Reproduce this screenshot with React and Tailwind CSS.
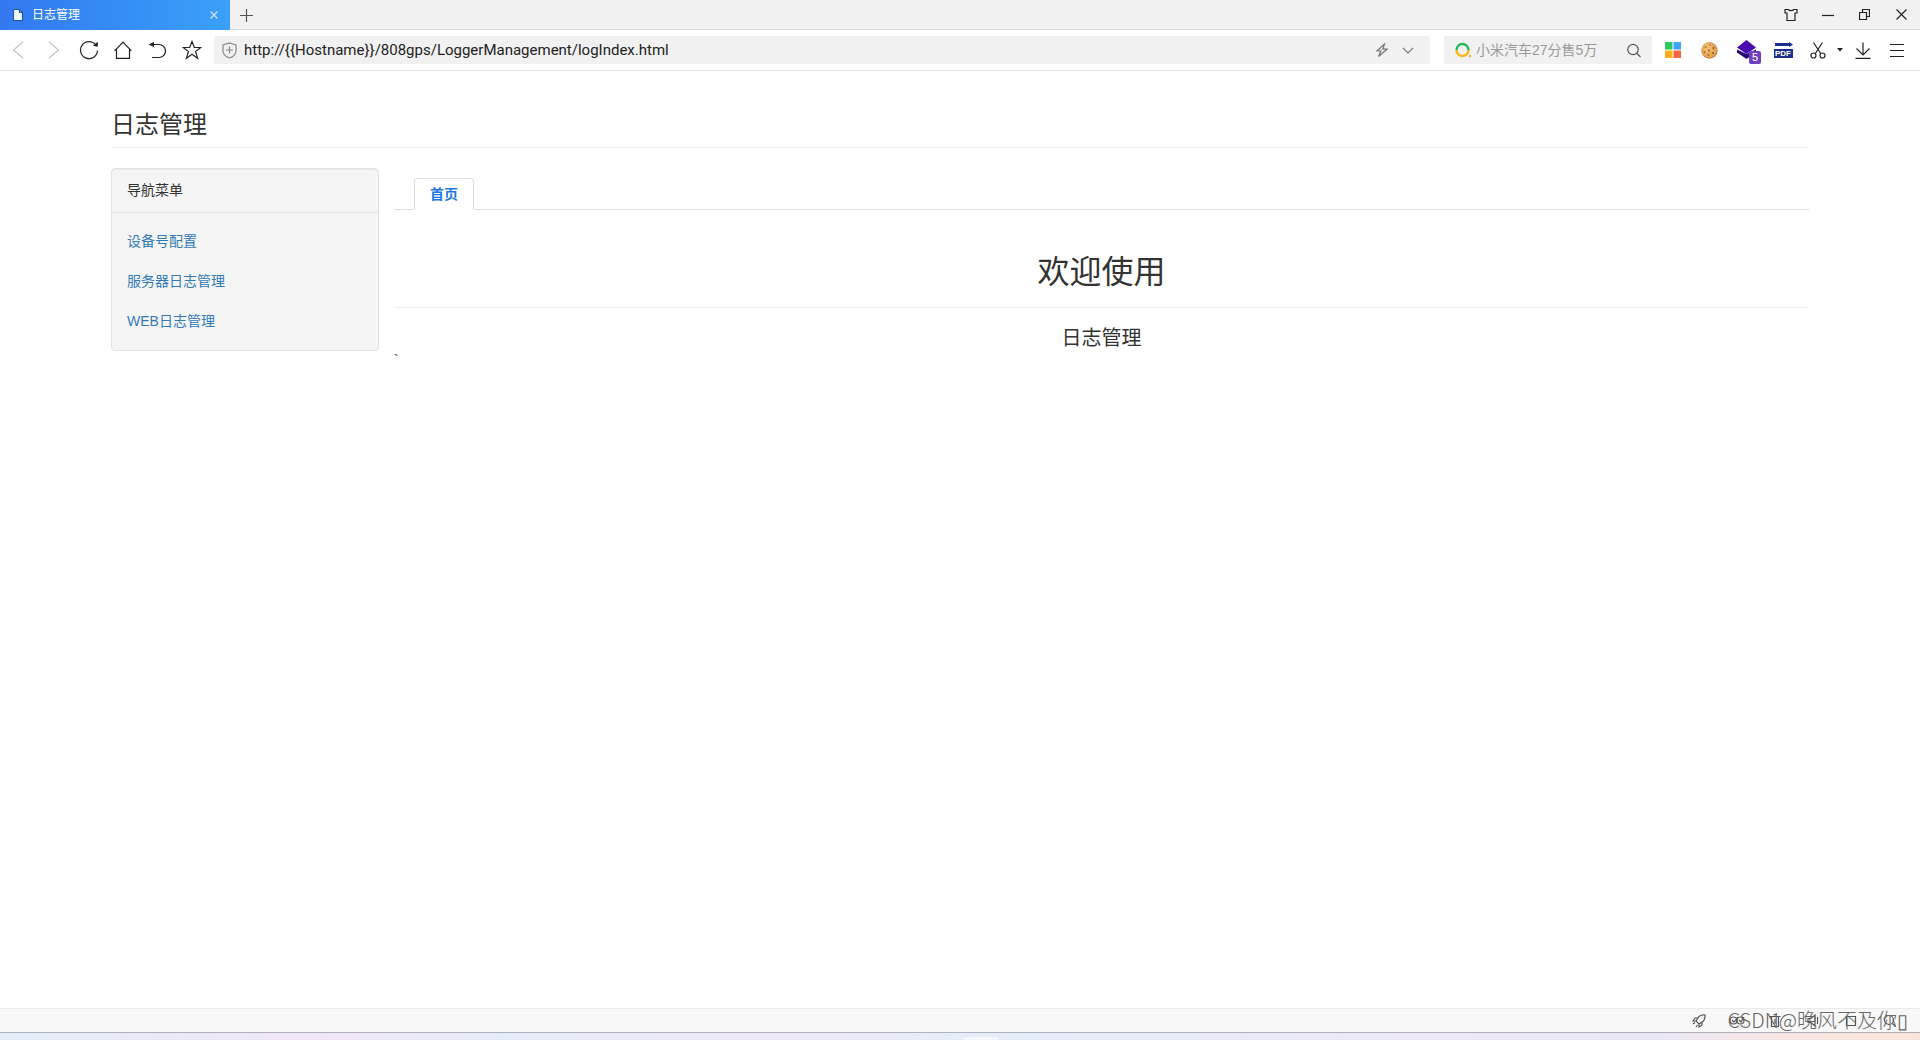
import clsx from 'clsx';

const menu = ['设备号配置', '服务器日志管理', 'WEB日志管理'];

function Icon({ w, h, className, children }) {
  return (
    <svg
      width={w}
      height={h}
      viewBox={`0 0 ${w} ${h}`}
      fill="none"
      stroke="currentColor"
      strokeWidth="1.2"
      className={clsx('shrink-0', className)}
      aria-hidden="true"
    >
      {children}
    </svg>
  );
}

function IconButton({ label, className, children }) {
  return (
    <button
      type="button"
      aria-label={label}
      className={clsx('flex h-full shrink-0 items-center justify-center', className)}
    >
      {children}
    </button>
  );
}

function TabStrip() {
  return (
    <div className="flex h-[30px] items-stretch border-b border-[#dcdcdc] bg-[#f1f1f1] text-[#222]">
      <div className="-mb-px flex w-[230px] items-center bg-linear-to-r from-[#3478f0] via-[#358cf5] to-[#3aa0f8] pr-2.5 pl-3 text-white">
        <Icon w={12} h={14}>
          <path d="M1.500 1.500h6l3 3v8h-9z" fill="#f4f6fa" stroke="#1f5aa8" />
          <path d="M7.500 1.500v3h3" stroke="#1f5aa8" />
        </Icon>
        <span className="ml-2 flex-1 truncate text-xs">日志管理</span>
        <button type="button" aria-label="关闭标签页" className="flex size-3 items-center justify-center">
          <Icon w={8} h={8}>
            <path d="M.5.5l7 7M7.500.5l-7 7" stroke="#cfe3ff" />
          </Icon>
        </button>
      </div>
      <IconButton label="新建标签页" className="w-8 text-[#555]">
        <Icon w={14} h={14}>
          <path d="M7.500 1v13M1 7.500h13" />
        </Icon>
      </IconButton>
      <div className="flex-1" />
      <IconButton label="皮肤" className="w-[37px]">
        <Icon w={14} h={14}>
          <path d="M4.500 1.500C5 3 9 3 9.500 1.500h3.500V5h-2v7.500H3V5H1V1.500z" />
        </Icon>
      </IconButton>
      <IconButton label="最小化" className="w-[37px]">
        <Icon w={12} h={12}>
          <path d="M0 6.500h12" />
        </Icon>
      </IconButton>
      <IconButton label="还原" className="w-[37px]">
        <Icon w={11} h={11}>
          <path d="M.5 3.500h7v7h-7zM3.500 3.500v-3h7v7h-3" />
        </Icon>
      </IconButton>
      <IconButton label="关闭" className="w-[37px]">
        <Icon w={11} h={11}>
          <path d="M.5.5l10 10M10.500.5l-10 10" />
        </Icon>
      </IconButton>
    </div>
  );
}

function Toolbar() {
  return (
    <div className="flex h-[41px] items-center border-b border-[#e2e2e2] bg-white text-[#222]">
      <IconButton label="后退" className="w-9 text-[#c4c4c4]">
        <Icon w={12} h={18}>
          <path d="M11 .8L1.500 9l9.500 8.200" />
        </Icon>
      </IconButton>
      <IconButton label="前进" className="w-9 text-[#c4c4c4]">
        <Icon w={12} h={18}>
          <path d="M1 .8L10.500 9 1 17.200" />
        </Icon>
      </IconButton>
      <IconButton label="刷新" className="w-[34px]">
        <Icon w={20} h={20}>
          <path d="M16.800 5A8.500 8.500 0 1 0 18.500 10.500" />
          <path d="M18.800 1.800v5l-5-1z" fill="currentColor" stroke="none" />
        </Icon>
      </IconButton>
      <IconButton label="主页" className="w-[34px]">
        <Icon w={18} h={18}>
          <path d="M.6 9.800L9 1l8.400 8.800M2.500 8v9.400h13V8" />
        </Icon>
      </IconButton>
      <IconButton label="恢复" className="w-[34px]">
        <Icon w={18} h={18}>
          <path d="M3 3.500h8a6.500 6.500 0 0 1 0 13H4" />
          <path d="M.5 3.500L6 1v5z" fill="currentColor" stroke="none" />
        </Icon>
      </IconButton>
      <IconButton label="收藏" className="w-9">
        <Icon w={20} h={20}>
          <path d="M10 1.500l2.300 6h6.400l-5.100 4.100 2 6.600L10 14.300l-5.600 3.900 2-6.600L1.300 7.500h6.400z" />
        </Icon>
      </IconButton>

      <div className="ml-1 flex h-7 flex-1 items-center rounded-xs bg-[#f1f1f1] pr-4 pl-2">
        <Icon w={15} h={17} className="text-[#888]">
          <path d="M7.500 1L14 3v6c0 3.500-3 5.800-6.500 7C4 14.800 1 12.500 1 9V3zM7.500 4.500v7M4 8h7" />
        </Icon>
        <input
          type="text"
          aria-label="地址栏"
          defaultValue={'http://{{Hostname}}/808gps/LoggerManagement/logIndex.html'}
          className="ml-[7px] h-6 min-w-0 flex-1 bg-transparent pb-px font-['Roboto',sans-serif] text-[15px] leading-5 outline-none"
        />
        <IconButton label="极速模式" className="w-6 text-[#777]">
          <Icon w={12} h={14}>
            <path d="M8.500 1L1 8h4l-2.500 5.500L11 6.200H7z" />
          </Icon>
        </IconButton>
        <IconButton label="历史地址" className="ml-2 w-3 text-[#777]">
          <Icon w={12} h={7}>
            <path d="M.8.800L6 6 11.200.8" />
          </Icon>
        </IconButton>
      </div>

      <div className="ml-[14px] flex h-7 w-[208px] items-center rounded-xs bg-[#f1f1f1] pr-1.5 pl-[11px]">
        <Icon w={17} h={16}>
          <path d="M1.500 8a6 6 0 0 1 12 0" stroke="#1fb955" strokeWidth="2.400" />
          <path d="M1.500 8a6 6 0 0 0 12 0" stroke="#f7b516" strokeWidth="2.400" />
          <circle cx="15" cy="14" r="1.200" fill="#f7b516" stroke="none" />
        </Icon>
        <input
          type="text"
          aria-label="搜索"
          placeholder="小米汽车27分售5万"
          className="ml-1 min-w-0 flex-1 bg-transparent text-sm outline-none placeholder:text-[#999]"
        />
        <IconButton label="搜索" className="w-6 text-[#555]">
          <Icon w={14} h={15}>
            <circle cx="6" cy="6.500" r="5.200" />
            <path d="M10 10.500l3.500 3.500" />
          </Icon>
        </IconButton>
      </div>

      <IconButton label="应用" className="ml-[3px] w-9">
        <Icon w={16} h={16} className="stroke-none">
          <path d="M0 0h7.500v7.500H0z" fill="#2bc761" />
          <path d="M8.500 0H16v7.500H8.500z" fill="#3fa3f8" />
          <path d="M0 8.500h7.500V16H0z" fill="#ffb014" />
          <path d="M8.500 8.500H16V16H8.500z" fill="#fd6444" />
        </Icon>
      </IconButton>
      <IconButton label="Cookie" className="w-9">
        <Icon w={17} h={17} className="stroke-none">
          <circle cx="8.500" cy="8.500" r="8.200" fill="#c58344" />
          <circle cx="8" cy="8" r="7.600" fill="#e6a857" />
          <circle cx="7" cy="6" r="4.500" fill="#f0bb70" />
          <g fill="#7d4a22">
            <circle cx="4.500" cy="5" r=".8" />
            <circle cx="9" cy="3" r=".7" />
            <circle cx="12.500" cy="6" r=".9" />
            <circle cx="8" cy="8.500" r=".9" />
            <circle cx="3.500" cy="10" r=".8" />
            <circle cx="12" cy="11" r=".9" />
            <circle cx="7.500" cy="13" r=".8" />
          </g>
        </Icon>
      </IconButton>
      <IconButton label="扩展" className="relative w-[38px]">
        <Icon w={20} h={20} className="stroke-none">
          <path d="M1 12.500V9.500l9.500 4.500L20 9.500v3L10.500 19z" fill="#23067c" />
          <path d="M10.500 0L20 7.500 10.500 14 1 7.500z" fill="#4a0bb0" />
        </Icon>
        <span className="absolute right-1 bottom-1.5 flex h-[13px] w-3 items-center justify-center rounded-xs bg-[#7040c0] font-['Liberation_Sans',sans-serif] text-[11px] leading-none text-white">
          5
        </span>
      </IconButton>
      <IconButton label="PDF" className="w-9">
        <span className="flex flex-col items-center">
          <Icon w={19} h={5}>
            <path d="M1 1h14V0l4 2.500L15 5V4H1z" fill="#1d2f88" stroke="none" />
          </Icon>
          <span className="mt-0.5 flex h-[9px] w-[19px] items-center justify-center bg-[#1d2f88] font-['Liberation_Sans',sans-serif] text-[8px] leading-none font-bold text-white">
            PDF
          </span>
        </span>
      </IconButton>
      <IconButton label="截图" className="w-[34px]">
        <Icon w={16} h={17}>
          <path d="M3.500.5l7.200 11M12.500.5l-7.200 11" />
          <circle cx="3.500" cy="13.500" r="2.500" />
          <circle cx="12.500" cy="13.500" r="2.500" />
        </Icon>
      </IconButton>
      <IconButton label="截图选项" className="w-2.5">
        <Icon w={6} h={4}>
          <path d="M0 0h6L3 3.500z" fill="currentColor" stroke="none" />
        </Icon>
      </IconButton>
      <IconButton label="下载" className="w-9">
        <Icon w={16} h={17}>
          <path d="M8 .5v12M1.500 6.500L8 13l6.500-6.500M.5 16.400h15" />
        </Icon>
      </IconButton>
      <IconButton label="菜单" className="mr-[7px] w-8">
        <Icon w={14} h={15}>
          <path d="M0 1.500h14M0 7.500h14M0 13.500h14" />
        </Icon>
      </IconButton>
    </div>
  );
}

function Sidebar() {
  return (
    <nav className="w-[268px] shrink-0 rounded-[4px] border border-[#e3e3e3] bg-[#f5f5f5] shadow-[inset_0_1px_1px_rgba(0,0,0,0.05)]">
      <div className="border-b border-[#e3e3e3] px-[15px] pt-[11px] pb-3 text-sm leading-5">导航菜单</div>
      <ul className="px-[15px] pt-2 pb-[9px]">
        {menu.map((item) => (
          <li key={item} className="py-2.5 text-sm leading-5">
            <a href="#" className="text-[#337ab7]">{item}</a>
          </li>
        ))}
      </ul>
    </nav>
  );
}

function StatusBar() {
  return (
    <footer className="relative">
      <div className="flex h-[25px] items-center justify-end border-y border-t-[#ebebeb] border-b-[#aeb0bb] bg-[#f8f8f8] pr-3 text-[#555]">
        <IconButton label="加速" className="w-[38px]">
          <Icon w={14} h={14}>
            <path d="M4 7l3-4.500C9 1 11 .8 13 1c.2 2 0 4-1.500 6L7 10zM4 7H1l2-3h3M7 10v3l3-2V8M3 8.500l-2 1.500M5.500 11L4 13" />
          </Icon>
        </IconButton>
        <IconButton label="护眼" className="w-[38px]">
          <Icon w={16} h={13}>
            <circle cx="4.500" cy="6.500" r="3.500" />
            <circle cx="11.500" cy="6.500" r="3.500" />
            <path d="M3 6l2 2 4-5M10 6l2 2 3-5" />
          </Icon>
        </IconButton>
        <IconButton label="清理" className="w-[38px]">
          <Icon w={12} h={13}>
            <path d="M.5 2.500h11M2.500 2.500v10h7v-10M4.500.6h3M6 5v5" />
          </Icon>
        </IconButton>
        <IconButton label="声音" className="w-[38px]">
          <Icon w={13} h={13}>
            <path d="M1 4.500h3l4-3.500v11L4 8.500H1zM10.500 3v7" />
          </Icon>
        </IconButton>
        <IconButton label="窗口" className="w-[38px]">
          <Icon w={12} h={12}>
            <path d="M1.500 1.500h9v9h-9z" />
          </Icon>
        </IconButton>
        <IconButton label="缩放" className="w-[38px]">
          <Icon w={13} h={13}>
            <circle cx="6" cy="6" r="4.500" />
            <path d="M9.500 9.500l3 3" />
          </Icon>
        </IconButton>
      </div>
      <div className="flex h-[7px] items-end bg-[linear-gradient(90deg,#e3eef9_0%,#ece8f8_10%,#f2e6f6_17%,#e5ecf9_26%,#f0e8f6_40%,#e5eefa_50%,#e9eaf8_65%,#efe8f6_75%,#e9e7f5_86%,#f8e6e4_93%,#fae4da_100%)] pl-[963px]">
        <div className="h-[3px] w-9 rounded-t-sm bg-[#f6f7fd]" />
      </div>
      <span className="pointer-events-none absolute right-3 bottom-2 font-['Noto_Sans_CJK_SC',sans-serif] text-xl leading-6 font-light whitespace-nowrap text-[#666]">
        CSDN@晚风不及你▯
      </span>
    </footer>
  );
}

export default function App() {
  return (
    <div className="flex min-h-screen flex-col bg-white font-['Liberation_Sans','Noto_Sans_CJK_SC',sans-serif] text-[#333]">
      <TabStrip />
      <Toolbar />
      <main className="flex-1 px-[111px] pt-[38px]">
        <h1 className="border-b border-[#eee] pb-1.5 text-2xl leading-8">日志管理</h1>
        <div className="mt-5 flex items-start gap-[15px]">
          <Sidebar />
          <section className="min-w-0 flex-1 pt-2.5">
            <div role="tablist" className="flex border-b border-[#ddd] pl-5">
              <button
                type="button"
                role="tab"
                aria-selected="true"
                className="-mb-px h-8 rounded-t-[4px] border border-[#ddd] border-b-white px-[15px] pb-px text-sm font-bold text-[#1e78dc]"
              >
                首页
              </button>
            </div>
            <div role="tabpanel">
              <h2 className="border-b border-[#eee] pt-[42px] pb-[15px] text-center text-[32px] leading-10">
                欢迎使用
              </h2>
              <h3 className="pt-4 text-center text-xl leading-7">日志管理</h3>
              <p className="text-sm leading-4">`</p>
            </div>
          </section>
        </div>
      </main>
      <StatusBar />
    </div>
  );
}
